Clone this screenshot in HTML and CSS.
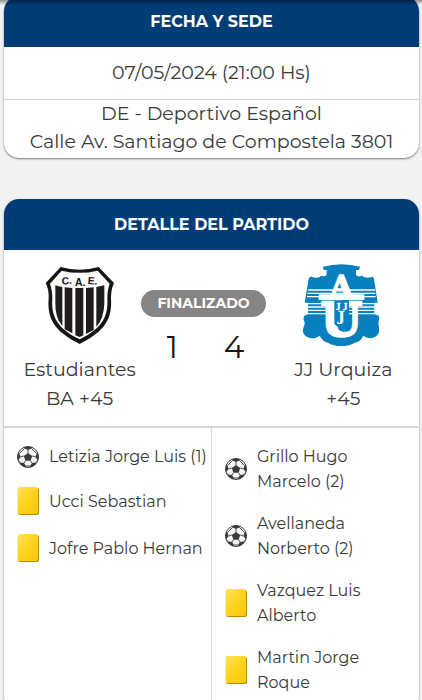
FILE: index.html
```html
<!DOCTYPE html>
<html lang="es">
<head>
<meta charset="utf-8">
<meta name="viewport" content="width=device-width, initial-scale=1">
<title>Detalle del partido</title>
<link rel="stylesheet" href="styles.css">
</head>
<body>
<svg class="defs" aria-hidden="true">
  <defs>
    <linearGradient id="yellow" x1="0" y1="0" x2="1" y2="1">
      <stop offset="0" stop-color="#ffe45c"/><stop offset=".5" stop-color="#ffd31c"/><stop offset="1" stop-color="#fcc900"/>
    </linearGradient>
    <clipPath id="disc"><circle cx="12" cy="12" r="10.5"/></clipPath>
    <symbol id="ball" viewBox="0 0 24 24">
      <circle cx="12" cy="12" r="10.5" fill="#f4f4f4"/>
      <g clip-path="url(#disc)">
        <path fill="#3a3a3d" d="M12 8l4.200 3-1.600 4.800H9.400L7.800 11zM7 0h10l-1.500 3.500L12 5 8.500 3.500zM0 6l3.500 2.500 1 3.500-2.500 3.500H0zM24 6l-3.500 2.500-1 3.500 2.500 3.500h2zM4 17.500l4 .5 2 3-1 3H3zM20 17.500l-4 .5-2 3 1 3h6z"/>
        <path fill="none" stroke="#4a4a4d" stroke-width="1" d="M12 8V5M16.200 11l3.500 1M14.600 15.800l1.500 2.400M9.400 15.800l-1.500 2.400M7.800 11l-3.500 1M8.500 3.500L3.500 8.500M15.500 3.500l5 5M2 15.500l2 2M22 15.500l-2 2M10 21h4"/>
      </g>
      <circle cx="12" cy="12" r="10.500" fill="none" stroke="#3c3c3f"/>
    </symbol>
    <symbol id="card" viewBox="0 0 24 30">
      <rect x="2" y="2" width="21" height="27" rx="2" fill="#b58b14"/>
      <rect x="1.500" y="1" width="20.500" height="27" rx="2" fill="url(#yellow)"/>
    </symbol>
  </defs>
</svg>
<div class="top-shadow"></div>
<main>
  <section class="panel">
    <h2 class="panel-title">FECHA Y SEDE</h2>
    <p class="date">07/05/2024 (21:00 Hs)</p>
    <p class="venue">DE - Deportivo Español<br>Calle Av. Santiago de Compostela 3801</p>
  </section>

  <section class="panel">
    <h2 class="panel-title">DETALLE DEL PARTIDO</h2>
    <div class="match">
      <div class="team">
        <svg class="crest" viewBox="0 0 300 300" role="img" aria-label="Estudiantes BA">
          <path fill="#151515" d="M92 36Q149 52 206 36L252 84Q243 102 243 130C247 192 225 229 149 267C73 229 51 192 56 130Q57 102 47 84Z"/>
          <path fill="#fff" d="M95 47Q149 60 203 47L239 86Q232 105 232 132C235 185 216 220 149 253C82 220 63 185 67 132Q67 105 60 86Z"/>
          <path fill="#211c1c" d="M76 91Q86 94 97 96V214Q75 187 76 145ZM104 97L127 99V235L104 223ZM136 99H160V241L149 246L136 241ZM168 99L191 97V225L168 237ZM199 96L223 91V145Q222 190 199 216Z"/>
          <g class="crest-initials">
            <text x="95" y="88" transform="rotate(-5 110 80)">C.</text>
            <text x="135" y="93">A.</text>
            <text x="173" y="88" transform="rotate(5 185 80)">E.</text>
          </g>
        </svg>
        <p class="team-name">Estudiantes BA +45</p>
      </div>
      <div class="result">
        <span class="status">FINALIZADO</span>
        <div class="score"><span>1</span><span>4</span></div>
      </div>
      <div class="team">
        <svg class="crest" viewBox="0 0 300 300" role="img" aria-label="JJ Urquiza">
          <path fill="#087fbe" d="M90 35Q145 20 201 35L198 45H189V59Q195 68 206 62Q220 73 237 65Q241 64 243 71L254 143H244V178Q262 181 258 194Q254 203 258 215Q263 246 230 250Q219 249 211 242Q202 261 185 263Q170 273 145 273Q120 273 105 263Q89 260 80 242Q62 256 42 246Q24 234 32 215Q38 204 32 194Q29 181 45 178V143H35L47 71Q49 64 56 65Q73 73 86 62Q96 68 101 59V45H92Z"/>
          <path stroke="#fff" stroke-width="4" d="M45 105H246M43 115H247M42 125H248M44 146H246M44 156H246M44 166H246M44 176H246"/>
          <path fill="#fff" d="M77 118H214V135H77Z"/>
          <g class="monogram">
            <text class="mono-a" x="145" y="126">A</text>
            <text class="mono-u" x="145" y="243">U</text>
          </g>
          <path fill="#087fbe" d="M124 137H168V205Q163 217 146 217Q129 217 124 205Z"/>
          <g class="monogram inner">
            <text class="mono-j" x="137" y="159">J</text>
            <text class="mono-j" x="158" y="159">J</text>
            <text class="mono-k" x="145" y="197">J</text>
          </g>
        </svg>
        <p class="team-name">JJ Urquiza +45</p>
      </div>
    </div>
    <div class="events">
      <ul class="event-list">
        <li><svg class="ball" role="img" aria-label="Gol"><use href="#ball"/></svg><span class="line">Letizia Jorge Luis (1)</span></li>
        <li><svg class="booking" role="img" aria-label="Amarilla"><use href="#card"/></svg><span class="line">Ucci Sebastian</span></li>
        <li><svg class="booking" role="img" aria-label="Amarilla"><use href="#card"/></svg><span class="line">Jofre Pablo Hernan</span></li>
      </ul>
      <ul class="event-list away">
        <li><svg class="ball" role="img" aria-label="Gol"><use href="#ball"/></svg><span>Grillo Hugo Marcelo (2)</span></li>
        <li><svg class="ball" role="img" aria-label="Gol"><use href="#ball"/></svg><span>Avellaneda Norberto (2)</span></li>
        <li><svg class="booking" role="img" aria-label="Amarilla"><use href="#card"/></svg><span>Vazquez Luis Alberto</span></li>
        <li><svg class="booking" role="img" aria-label="Amarilla"><use href="#card"/></svg><span>Martin Jorge Roque</span></li>
      </ul>
    </div>
  </section>
</main>
</body>
</html>
```
FILE: styles.css
```css
* { box-sizing: border-box; margin: 0; padding: 0; }
html { scrollbar-width: none; }
body {
  background: #f2f2f2;
  color: #3a3a3a;
  font-family: Montserrat, Inter, "Open Sans", sans-serif;
  font-weight: 400;
  overflow-x: hidden;
}
.defs { position: absolute; width: 0; height: 0; }
.top-shadow {
  position: fixed;
  inset: 0 0 auto;
  height: 5px;
  background: linear-gradient(rgba(0, 0, 0, .4), rgba(0, 0, 0, 0));
}
main {
  display: flex;
  flex-direction: column;
  gap: 41px;
  margin-top: -4px;
  padding: 0 3px 24px 4px;
}
.panel {
  background: #fff;
  border-radius: 15px;
  overflow: hidden;
  box-shadow: 0 1px 2px rgba(0, 0, 0, .5);
}
.panel-title {
  background: #003c75;
  color: #fff;
  font-size: 16px;
  font-weight: 700;
  line-height: 51px;
  text-align: center;
}
.date, .venue { font-size: 19px; line-height: 28px; text-align: center; }
.date { padding: 12px 0; border-bottom: 1px solid #cfcfcf; }
.venue { padding-bottom: 2px; }
.match {
  display: grid;
  grid-template-columns: 140fr 125fr 140fr;
  padding: 5px 6px 13px 6px;
  border-bottom: 2px solid #d6d6d6;
}
.team { display: flex; flex-direction: column; align-items: center; }
.crest { width: 100px; height: 100px; }
.crest-initials { font: 700 31px "Liberation Sans", sans-serif; fill: #111; }
.monogram {
  font-family: "DejaVu Serif", serif;
  font-weight: 700;
  text-anchor: middle;
  fill: #fff;
  stroke: #fff;
  stroke-width: 7px;
}
.monogram.inner { stroke-width: 1px; }
.mono-a { font-size: 88px; stroke-width: 5px; }
.mono-u { font-size: 142px; }
.mono-j { font-size: 24px; }
.mono-k { font-size: 40px; }
.team-name { max-width: 120px; font-size: 19px; line-height: 29px; text-align: center; }
.result { margin: 35px 8px 0 -8px; }
.status {
  display: block;
  border-radius: 14px;
  background: #858585;
  color: #fff;
  font-size: 14px;
  font-weight: 700;
  line-height: 27px;
  text-align: center;
}
.score {
  display: flex;
  justify-content: center;
  gap: 46px;
  padding: 10px 0 0 4px;
  color: #151515;
  font-size: 31px;
  line-height: 40px;
}
.events { display: grid; grid-template-columns: 207fr 208fr; }
.event-list {
  display: flex;
  flex-direction: column;
  gap: 17px;
  min-width: 0;
  padding: 16px 0 16px 12px;
  list-style: none;
  font-size: 16px;
  line-height: 25px;
}
.event-list li { display: flex; align-items: center; gap: 9px; }
.event-list.away { border-left: 1px solid #d6d6d6; padding-right: 40px; }
.line { white-space: nowrap; }
.ball, .booking { flex: none; width: 24px; }
.ball { height: 24px; }
.booking { height: 30px; }
```
